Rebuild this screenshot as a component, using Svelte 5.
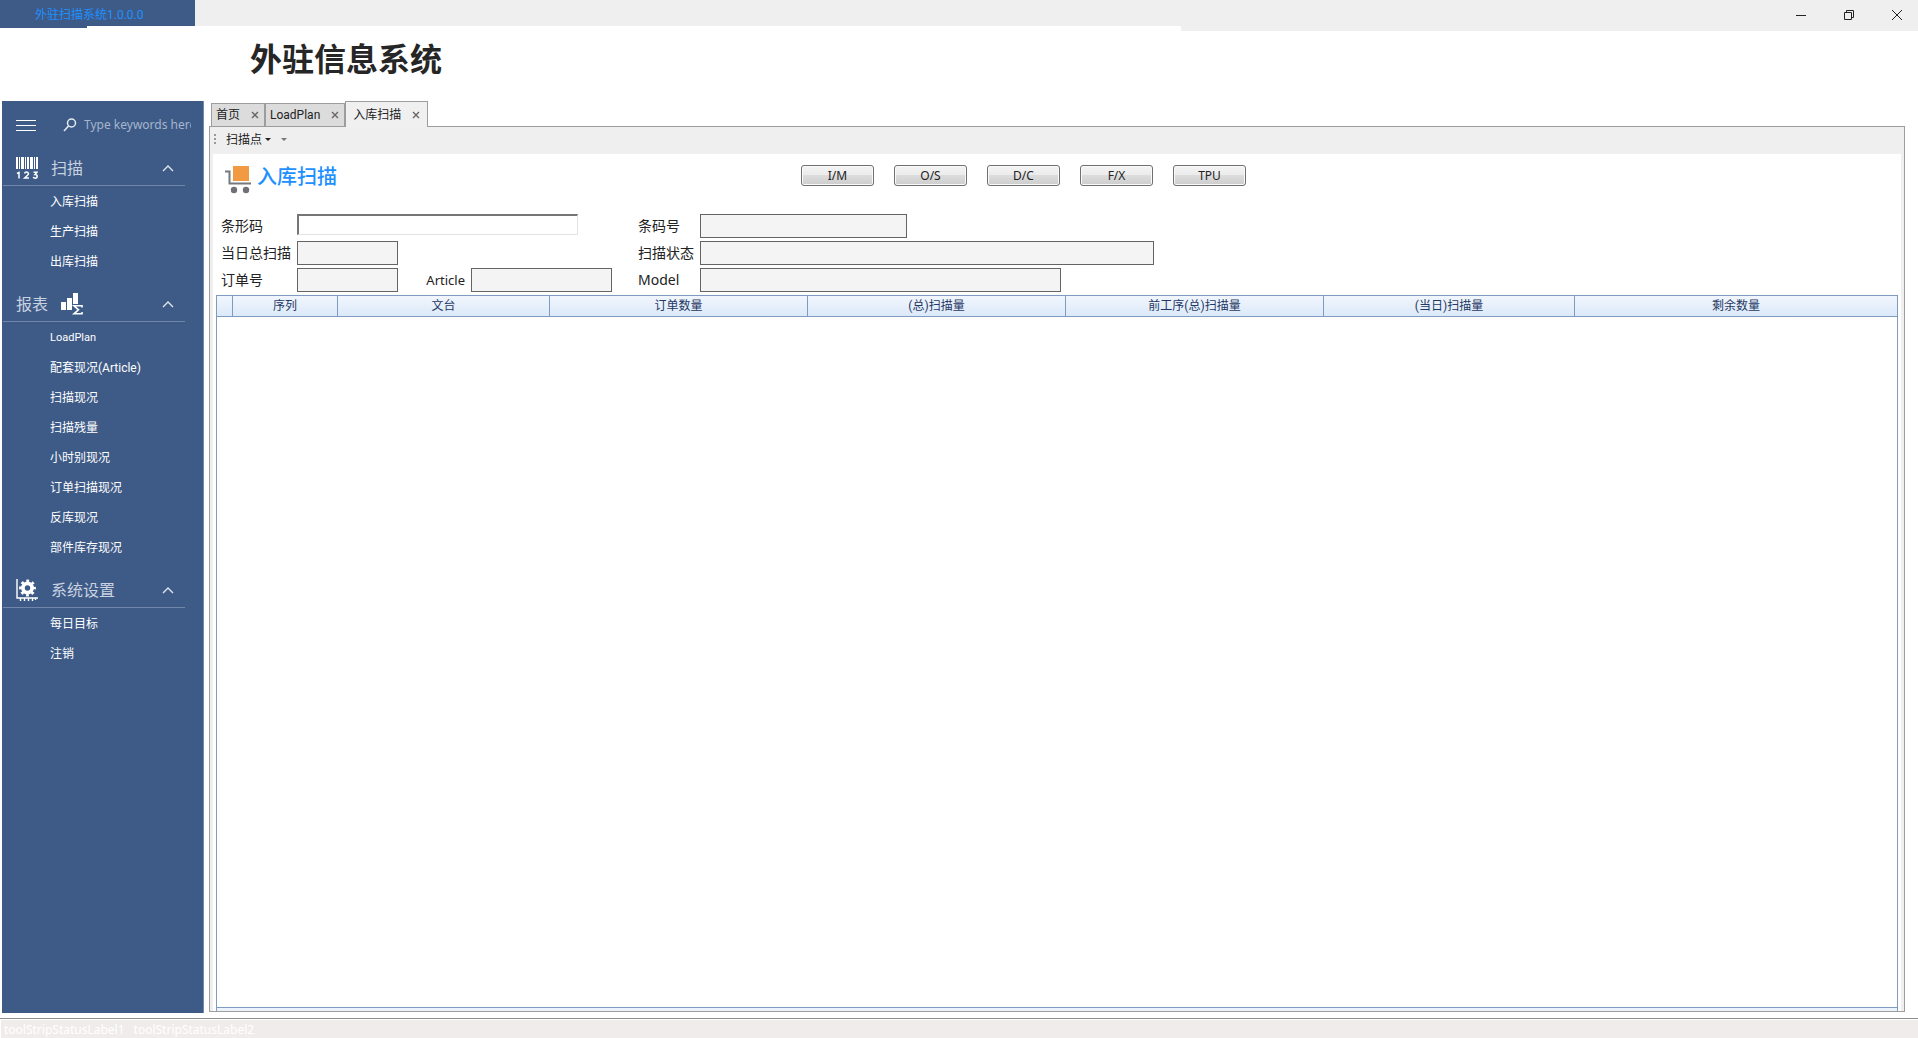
<script>
  const sections = [
    { icon: 'barcode', title: '扫描', items: ['入库扫描', '生产扫描', '出库扫描'] },
    {
      icon: 'chart',
      title: '报表',
      iconAfter: true,
      items: ['LoadPlan', '配套现况(Article)', '扫描现况', '扫描残量', '小时别现况', '订单扫描现况', '反库现况', '部件库存现况']
    },
    { icon: 'gear', title: '系统设置', items: ['每日目标', '注销'] }
  ];
  const tabs = ['首页', 'LoadPlan', '入库扫描'];
  const points = ['I/M', 'O/S', 'D/C', 'F/X', 'TPU'];
  const columns = ['序列', '文台', '订单数量', '(总)扫描量', '前工序(总)扫描量', '(当日)扫描量', '剩余数量'];

  let active = $state(2);
  let open = $state([true, true, true]);
  let barcode = $state('');
  let keywords = $state('');
</script>

{#snippet icon(name)}
  {#if name === 'barcode'}
    <svg class="icon" viewBox="0 0 22 22" fill="#fff" aria-hidden="true">
      <path d="M0 0h2v12H0zM3 0h1v12H3zM5 0h3v12H5zM9 0h1v12H9zM11 0h2v12h-2zM14 0h3v12h-3zM18 0h1v12h-1zM20 0h2v12h-2z" />
      <path d="M1 16.500l2-1v6M8.500 16.500q.5-1.500 2-1.500t2 1.500q0 1-1.500 2.300L8.700 21H13M17.500 15.200h3.500l-2 2.300q2.200 0 2.200 1.800t-2 1.900q-1.400 0-2-1.200" fill="none" stroke="#fff" stroke-width="1.500" />
    </svg>
  {:else if name === 'chart'}
    <svg class="icon" viewBox="0 0 22 22" fill="#fff" aria-hidden="true">
      <path d="M0 9h5v8H0zM6 5h5v12H6zM12 0h5v11h-5z" />
      <path d="M21 14.500v-1.700h-8l4.500 4-4.500 4h8V19" fill="none" stroke="#fff" stroke-width="1.600" />
    </svg>
  {:else}
    <svg class="icon" viewBox="0 0 22 22" aria-hidden="true">
      <path d="M1 0v19h21M4.500 19v3M8.500 19v3M12.500 19v3M16.500 19v3M19.500 19v2" fill="none" stroke="#fff" stroke-width="1.400" />
      <circle cx="11.500" cy="9" r="4.600" fill="none" stroke="#fff" stroke-width="3.800" />
      <circle cx="11.500" cy="9" r="7" fill="none" stroke="#fff" stroke-width="2.800" stroke-dasharray="2.750 2.750" stroke-dashoffset="1.400" />
    </svg>
  {/if}
{/snippet}

<div class="window">
  <header class="titlebar">
    <div class="brand">外驻扫描系统1.0.0.0</div>
    <div class="drag"></div>
    <div class="controls">
      <button aria-label="最小化"><svg viewBox="0 0 12 12"><path d="M1 6.500h10" /></svg></button>
      <button aria-label="还原"><svg viewBox="0 0 12 12"><path d="M1.500 3.500h7v7h-7zM3.500 3.500v-2h7v7h-2" /></svg></button>
      <button aria-label="关闭"><svg viewBox="0 0 12 12"><path d="M1 1l10 10M11 1L1 11" /></svg></button>
    </div>
  </header>

  <h1>外驻信息系统</h1>

  <div class="body">
    <nav class="sidebar">
      <div class="search">
        <button class="burger" aria-label="菜单"><svg viewBox="0 0 20 12"><path d="M0 1.500h20M0 6.500h20M0 11.500h20" /></svg></button>
        <label for="keywords" aria-label="搜索">
          <svg viewBox="0 0 14 14"><circle cx="8.500" cy="5" r="4" /><path d="M5.500 8L1 13" /></svg>
        </label>
        <input id="keywords" type="text" placeholder="Type keywords here" bind:value={keywords} />
      </div>
      {#each sections as section, i}
        <button class="group" aria-expanded={open[i]} onclick={() => (open[i] = !open[i])}>
          {#if !section.iconAfter}{@render icon(section.icon)}{/if}
          <span>{section.title}</span>
          {#if section.iconAfter}{@render icon(section.icon)}{/if}
          <svg class="chevron" class:closed={!open[i]} viewBox="0 0 12 8"><path d="M1 7l5-5 5 5" /></svg>
        </button>
        {#if open[i]}
          <ul>
            {#each section.items as item}
              <li><a href="#top" class:latin={item === 'LoadPlan'}>{item}</a></li>
            {/each}
          </ul>
        {/if}
      {/each}
    </nav>

    <main>
      <div class="tabs">
        {#each tabs as tab, i}
          <div class="tab" class:active={active === i}>
            <button onclick={() => (active = i)}>{tab}</button>
            <button class="close" aria-label="关闭 {tab}"><svg viewBox="0 0 8 8"><path d="M1 1l6 6M7 1L1 7" /></svg></button>
          </div>
        {/each}
      </div>

      <section class="panel">
        <div class="toolbar">
          <span class="grip"></span>
          <button>扫描点<span class="arrow"></span></button>
          <button class="more" aria-label="更多"><span class="arrow"></span></button>
        </div>

        <div class="content">
          <div class="head">
            <h2>
              <svg viewBox="0 0 26 28" aria-hidden="true">
                <rect x="8" y="0" width="16" height="15" fill="#f29a42" />
                <path d="M0 5.500h4.500v12H26" fill="none" stroke="#77787f" stroke-width="2" />
                <circle cx="9" cy="24" r="3.200" fill="#707178" /><circle cx="21" cy="24" r="3.200" fill="#707178" />
              </svg>
              入库扫描
            </h2>
            <div class="points">
              {#each points as point}<button>{point}</button>{/each}
            </div>
          </div>

          <form onsubmit={(e) => e.preventDefault()}>
            <label for="barcode">条形码</label>
            <div class="fields"><input id="barcode" type="text" bind:value={barcode} /></div>
            <label for="number">条码号</label>
            <div class="fields"><input id="number" class="w-number" type="text" readonly /></div>

            <label for="total">当日总扫描</label>
            <div class="fields"><input id="total" class="w-short" type="text" readonly /></div>
            <label for="status">扫描状态</label>
            <div class="fields"><input id="status" class="w-status" type="text" readonly /></div>

            <label for="order">订单号</label>
            <div class="fields">
              <input id="order" class="w-short" type="text" readonly />
              <label class="inner" for="article">Article</label>
              <input id="article" class="w-article" type="text" readonly />
            </div>
            <label for="model">Model</label>
            <div class="fields"><input id="model" class="w-model" type="text" readonly /></div>
          </form>

          <div class="grid">
            <table>
              <colgroup>
                <col class="c-mark" /><col class="c-seq" /><col class="c-table" />
                <col class="c-qty" /><col class="c-qty" /><col class="c-qty" />
                <col class="c-day" /><col />
              </colgroup>
              <thead>
                <tr>
                  <td></td>
                  {#each columns as column}<th scope="col">{column}</th>{/each}
                </tr>
              </thead>
              <tbody></tbody>
            </table>
            <div class="gridfoot"></div>
          </div>
        </div>
      </section>
    </main>
  </div>

  <footer>
    <div><span>toolStripStatusLabel1</span><span>toolStripStatusLabel2</span></div>
  </footer>
</div>

<style>
  :global(body) { background: #fff; }
  .window, .window :global(*) { box-sizing: border-box; }
  .window {
    display: flex;
    flex-direction: column;
    min-height: 100vh;
    font-family: "Noto Sans", "Noto Sans CJK SC", sans-serif;
    font-size: 12px;
    line-height: 18px;
    color: #222;
  }
  button, input { font: inherit; color: inherit; margin: 0; }
  button { padding: 0; border: 0; background: none; }
  svg { display: block; flex: none; }

  .titlebar { display: flex; align-items: flex-start; height: 31px; flex: none; }
  .brand {
    position: relative;
    width: 195px;
    height: 26px;
    padding: 5px 0 0 35px;
    background: #3e5b87;
    color: #1e90ff;
    font-family: Roboto, "Noto Sans CJK SC", sans-serif;
    line-height: 20px;
    white-space: nowrap;
  }
  .brand::after {
    content: "";
    position: absolute;
    left: 0;
    top: 100%;
    width: 87px;
    height: 2px;
    background: #3e5b87;
  }
  .drag { flex: 986; height: 26px; background: #efefef; }
  .controls { flex: 737; height: 31px; display: flex; justify-content: flex-end; gap: 6px; background: #efefef; }
  .controls button { width: 42px; height: 30px; display: grid; place-items: center; }
  .controls svg { width: 12px; height: 12px; fill: none; stroke: #222; }

  h1 {
    margin: 0;
    height: 70px;
    padding: 4px 0 0 250px;
    font-size: 32px;
    line-height: 48px;
    font-weight: 700;
    color: #262626;
  }

  .body { flex: 1; display: flex; padding-left: 2px; }
  .sidebar { width: 202px; flex: none; margin-bottom: 5px; background: #3e5b87; border-right: 1px solid #7189ab; }
  .search { display: flex; align-items: center; height: 39px; padding: 8px 12px 0 14px; }
  .burger svg { width: 20px; height: 12px; stroke: #fff; }
  .search label { margin: 0 7px 0 27px; }
  .search label svg { width: 14px; height: 14px; fill: none; stroke: #e6ebf3; stroke-width: 1.5; }
  .search input {
    flex: 1;
    min-width: 0;
    height: 20px;
    padding: 0;
    border: 0;
    outline: 0;
    background: none;
    color: #fff;
    font-size: 12px;
  }
  .search input::placeholder { color: #a5b5cd; opacity: 1; }
  .group {
    display: flex;
    align-items: center;
    gap: 13px;
    width: 182px;
    height: 46px;
    margin-left: 1px;
    padding: 10px 11px 0 13px;
    border-bottom: 1px solid #7087a9;
    color: #c9d2e0;
    font-size: 16px;
    line-height: 24px;
  }
  .icon { width: 22px; height: 22px; }
  .chevron { width: 12px; height: 8px; margin-left: auto; fill: none; stroke: #e1e7f0; stroke-width: 1.4; }
  .closed { rotate: 180deg; }
  ul { list-style: none; margin: 0; padding: 0; }
  li a {
    display: block;
    height: 30px;
    padding-left: 48px;
    line-height: 32px;
    color: #fff;
    text-decoration: none;
    font-family: Roboto, "Noto Sans CJK SC", sans-serif;
  }
  li a.latin { font-size: 11px; }

  main { flex: 1; min-width: 0; display: flex; flex-direction: column; padding: 0 13px 6px 5px; }
  .tabs { display: flex; align-items: flex-end; height: 25px; padding-left: 2px; }
  .tab {
    display: flex;
    align-items: center;
    gap: 11px;
    height: 23px;
    padding: 0 5px 0 4px;
    border: 1px solid #9d9d9d;
    border-bottom: 0;
    background: #dcdcdc;
    font-family: Roboto, "Noto Sans CJK SC", sans-serif;
  }
  .tab.active {
    position: relative;
    height: 26px;
    margin-bottom: -1px;
    padding: 0 7px;
    background: #f0f0f0;
  }
  .close svg { width: 8px; height: 8px; fill: none; stroke: #666; stroke-width: 1.4; }

  .panel {
    flex: 1;
    display: flex;
    flex-direction: column;
    border: 1px solid #9d9d9d;
    background: #efefef;
  }
  .toolbar { display: flex; align-items: center; height: 27px; padding: 0 5px 2px 4px; }
  .grip { width: 2px; height: 11px; margin-right: 10px; background: repeating-linear-gradient(#999 0 2px, transparent 2px 4px); }
  .toolbar button { display: flex; align-items: center; gap: 3px; }
  .arrow { border: 3px solid transparent; border-top-color: #222; border-bottom: 0; }
  .more { margin-left: 10px; }
  .more .arrow { border-top-color: #777; }

  .content { flex: 1; display: flex; flex-direction: column; margin: 0 3px; padding: 0 3px; background: #fff; }
  .head { display: flex; align-items: flex-start; height: 60px; padding: 11px 0 0 9px; }
  h2 {
    display: flex;
    align-items: flex-start;
    gap: 6px;
    width: 576px;
    margin: 0;
    color: #1e90ff;
    font-size: 20px;
    font-weight: 500;
    line-height: 24px;
  }
  h2 svg { width: 26px; height: 28px; margin-top: 1px; }
  .points { display: flex; gap: 20px; }
  .points button {
    width: 73px;
    height: 21px;
    border: 1px solid #707070;
    border-radius: 3px;
    background: linear-gradient(#f3f3f3 0 5%, #ebebeb 50%, #dcdcdc 50%, #cdcdcd);
    box-shadow: inset 0 0 0 1px #fafafa;
    line-height: 18px;
  }

  form {
    display: grid;
    grid-template-columns: 76px 341px 62px 1fr;
    grid-auto-rows: 24px;
    row-gap: 3px;
    align-items: center;
    padding: 0 0 3px 5px;
    font-size: 14px;
    line-height: 24px;
    white-space: nowrap;
  }
  .fields { display: flex; height: 24px; }
  .fields input { height: 24px; padding: 0 4px; border: 1px solid #646464; background: #f4f4f4; }
  .fields #barcode { width: 281px; height: 21px; border: 2px solid; border-width: 2px 1px 1px 2px; border-color: #767676 #e3e3e3 #e3e3e3 #767676; background: #fff; }
  .inner { width: 73px; padding: 0 6px 0 0; text-align: right; font-size: 13px; }
  .w-short { width: 101px; }
  .w-number { width: 207px; }
  .w-status { width: 454px; }
  .w-article { width: 141px; }
  .w-model { width: 361px; }

  .grid {
    flex: 1;
    display: flex;
    flex-direction: column;
    justify-content: space-between;
    border: 1px solid #7f9bc0;
    border-bottom: 0;
  }
  table { width: 100%; border-collapse: separate; border-spacing: 0; table-layout: fixed; }
  .c-mark { width: 16px; }
  .c-seq { width: 105px; }
  .c-table { width: 212px; }
  .c-qty { width: 258px; }
  .c-day { width: 251px; }
  thead :is(th, td) {
    height: 21px;
    padding: 0;
    border-right: 1px solid #7f9bc0;
    border-bottom: 1px solid #7f9bc0;
    background: linear-gradient(#f1f6fd, #dce9f9);
    color: #1f3864;
    font-family: Roboto, "Noto Sans CJK SC", sans-serif;
    font-weight: 400;
    line-height: 20px;
  }
  thead th:last-child { border-right: 0; }
  .gridfoot { height: 4px; border-top: 1px solid #7f9bc0; background: #edf3fb; }

  footer { flex: none; height: 20px; padding: 1px 0 0 1px; border-top: 1px solid #8c8c8c; }
  footer div { display: flex; gap: 9px; height: 18px; padding-left: 3px; background: #f0ecec; color: #fff; line-height: 20px; }
</style>
